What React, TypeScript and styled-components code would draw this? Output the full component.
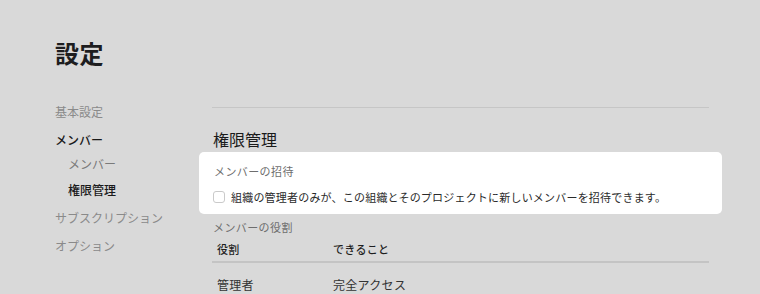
import React from "react";
import styled, { createGlobalStyle } from "styled-components";

const Global = createGlobalStyle`
  html, body { margin: 0; padding: 0; background: #d9d9d9; }
  body {
    font-family: "Noto Sans CJK JP", "Noto Sans", sans-serif;
    color: #1f1f1f;
    -webkit-font-smoothing: antialiased;
  }
`;

const Page = styled.div`
  padding: 37px 0 0 55px;
  width: 760px;
  height: 294px;
  box-sizing: border-box;
  overflow: hidden;
`;

const Title = styled.h1`
  margin: 0;
  font-size: 24px;
  line-height: 32px;
  font-weight: 700;
  color: #1d1d1f;
  letter-spacing: 0.5px;
`;

const Body = styled.div`
  display: flex;
  margin-top: 29px;
`;

const Sidebar = styled.nav`
  width: 157px;
  flex: none;
  display: flex;
  flex-direction: column;
`;

const NavItem = styled.div<{ $active?: boolean }>`
  font-size: 12px;
  line-height: 28px;
  color: ${(p) => (p.$active ? "#1a1a1a" : "#8a8a8a")};
  font-weight: ${(p) => (p.$active ? 500 : 400)};
`;

const SubNav = styled.div`
  display: flex;
  flex-direction: column;
  margin: -3px 0 1px 13px;
`;

const SubItem = styled.div<{ $active?: boolean }>`
  font-size: 12px;
  line-height: 26px;
  color: ${(p) => (p.$active ? "#1a1a1a" : "#7a7a7a")};
  font-weight: ${(p) => (p.$active ? 500 : 400)};
`;

const Main = styled.main`
  width: 497px;
  flex: none;
  padding-top: 9px;
`;

const Divider = styled.div`
  height: 1px;
  background: #c6c6c6;
`;

const Heading = styled.h2`
  margin: 19px 0 1px 1px;
  font-size: 16px;
  line-height: 24px;
  font-weight: 400;
  color: #1a1a1a;
`;

const Card = styled.section`
  margin: 0 -13px;
  background: #fff;
  border-radius: 5px;
  padding: 11px 14px 8px;
  display: flex;
  flex-direction: column;
  gap: 9px;
`;

const Label = styled.div`
  font-size: 11px;
  line-height: 16px;
  color: #6e6e6e;
  padding-left: 1px;
  letter-spacing: 0.4px;
`;

const CheckRow = styled.label`
  display: flex;
  align-items: center;
  gap: 6px;
  height: 18px;
  font-size: 11px;
  color: #2a2a2a;
  letter-spacing: 0.2px;
`;

const Box = styled.span`
  width: 12px;
  height: 12px;
  box-sizing: border-box;
  border: 1px solid #cacaca;
  border-radius: 3px;
  background: #fff;
  flex: none;
`;

const Caption = styled(Label)`
  margin-top: 5px;
`;

const Table = styled.div`
  margin-top: 2px;
  display: flex;
  flex-direction: column;
`;

const Row = styled.div<{ $head?: boolean }>`
  display: grid;
  grid-template-columns: 116px 1fr;
  align-items: center;
  padding-left: 5px;
  height: ${(p) => (p.$head ? "24px" : "42px")};
  border-bottom: ${(p) => (p.$head ? "2px solid #c4c4c4" : "none")};
  font-size: ${(p) => (p.$head ? "11px" : "12px")};
  font-weight: ${(p) => (p.$head ? 500 : 400)};
  color: ${(p) => (p.$head ? "#1f1f1f" : "#333")};
  letter-spacing: 0.3px;
`;

export default function App() {
  return (
    <>
      <Global />
      <Page>
        <Title>設定</Title>
        <Body>
          <Sidebar>
            <NavItem>基本設定</NavItem>
            <NavItem $active>メンバー</NavItem>
            <SubNav>
              <SubItem>メンバー</SubItem>
              <SubItem $active>権限管理</SubItem>
            </SubNav>
            <NavItem>サブスクリプション</NavItem>
            <NavItem>オプション</NavItem>
          </Sidebar>
          <Main>
            <Divider />
            <Heading>権限管理</Heading>
            <Card>
              <Label>メンバーの招待</Label>
              <CheckRow>
                <Box />
                組織の管理者のみが、この組織とそのプロジェクトに新しいメンバーを招待できます。
              </CheckRow>
            </Card>
            <Caption>メンバーの役割</Caption>
            <Table>
              <Row $head>
                <span>役割</span>
                <span>できること</span>
              </Row>
              <Row>
                <span>管理者</span>
                <span>完全アクセス</span>
              </Row>
            </Table>
          </Main>
        </Body>
      </Page>
    </>
  );
}
